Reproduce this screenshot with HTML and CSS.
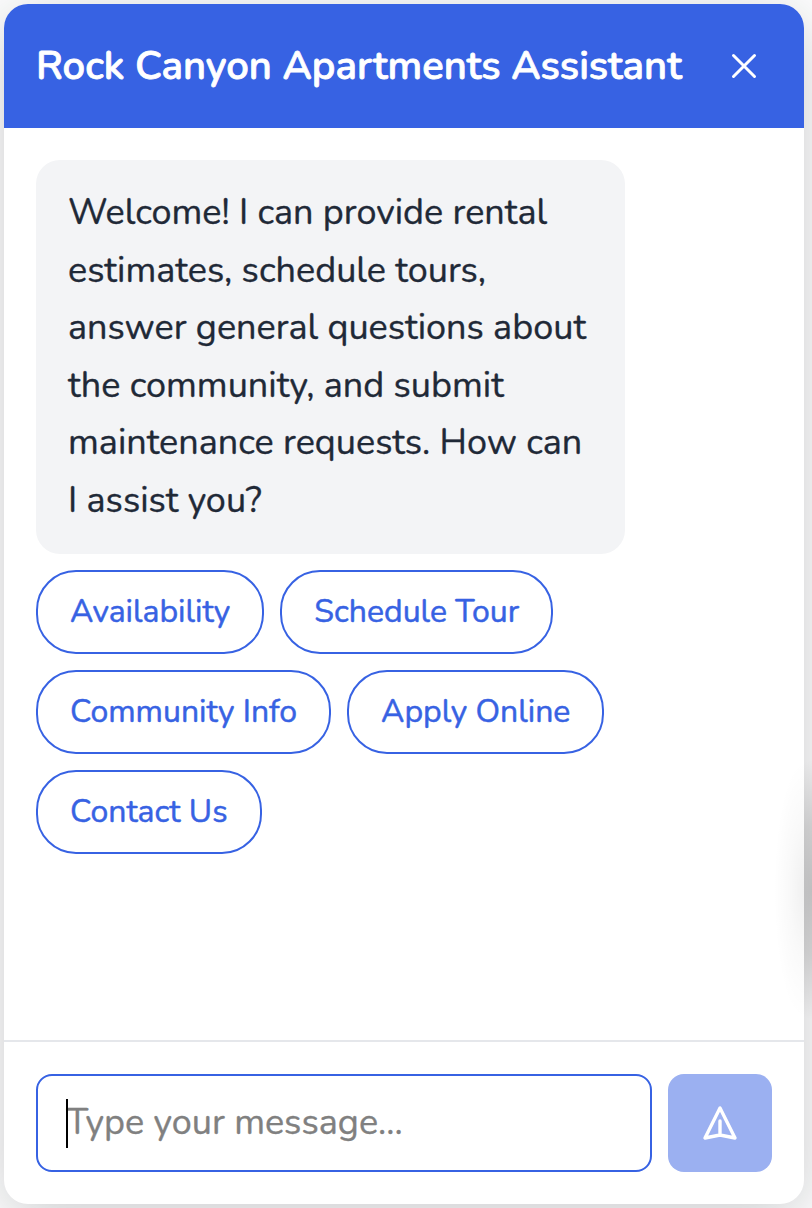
FILE: index.html
```html
<!DOCTYPE html>
<html lang="en">
<head>
<meta charset="utf-8">
<title>Rock Canyon Apartments Assistant</title>
<link rel="stylesheet" href="styles.css">
</head>
<body>
<main class="chat">
  <header class="header">
    <h1 class="title">Rock Canyon Apartments Assistant</h1>
    <button class="close" aria-label="Close"><svg width="26" height="26" viewBox="0 0 26 26"><path d="M2.5 2.5 23.5 23.5M23.5 2.5 2.5 23.5"/></svg></button>
  </header>
  <section class="messages">
    <div class="bubble">Welcome! I can provide rental estimates, schedule tours, answer general questions about the community, and submit maintenance requests. How can I&nbsp;assist you?</div>
    <div class="chips">
      <button class="chip">Availability</button>
      <button class="chip">Schedule Tour</button>
      <button class="chip">Community Info</button>
      <button class="chip">Apply Online</button>
      <button class="chip">Contact Us</button>
    </div>
  </section>
  <footer class="composer">
    <div class="field"><i class="caret"></i><span class="placeholder">Type your message...</span></div>
    <button class="send" aria-label="Send"><svg width="36" height="36" viewBox="0 0 36 36"><path d="M18 3 3 33 18 30 33 33ZM18 29V16"/></svg></button>
  </footer>
</main>
<div class="launcher-glow"></div>
<div class="launcher-edge"></div>
</body>
</html>
```
FILE: styles.css
```css
* { box-sizing: border-box; }
body {
  margin: 0;
  padding: 4px 8px 4px 4px;
  height: 1208px;
  background: #fff;
  font-family: Nunito, "Noto Sans", sans-serif;
  overflow: hidden;
  position: relative;
}
.chat {
  height: 1200px;
  display: flex;
  flex-direction: column;
  background: #fff;
  border-radius: 24px;
  overflow: hidden;
  box-shadow: 0 12px 64px rgba(20, 25, 35, .23);
}
.header {
  height: 124px;
  background: #3762e3;
  display: flex;
  align-items: center;
  justify-content: space-between;
  padding: 0 47px 0 32px;
}
.title {
  margin: 0;
  font-size: 40px;
  line-height: 60px;
  font-weight: 600;
  color: #fff;
  white-space: nowrap;
  -webkit-text-stroke: .8px;
}
button { font: inherit; border: 0; background: none; padding: 0; }
svg { display: block; }
svg path { fill: none; stroke: #fff; stroke-width: 3; stroke-linecap: round; stroke-linejoin: round; }
.messages { flex: 1; padding: 32px; }
.bubble {
  width: 589px;
  height: 394px;
  border-radius: 24px;
  background: #f3f4f6;
  color: #1f2937;
  padding: 24px 32px;
  font-size: 36px;
  line-height: 57.6px;
  -webkit-text-stroke: .35px;
}
.chips { margin-top: 16px; display: flex; flex-wrap: wrap; gap: 16px; width: 589px; }
.chip {
  height: 84px;
  border: 2px solid #3762e3;
  border-radius: 40px;
  padding: 0 32px 2px;
  color: #3762e3;
  font-size: 32px;
  white-space: nowrap;
  -webkit-text-stroke: .5px;
}
.composer { height: 164px; border-top: 2px solid #e5e7eb; padding: 32px; display: flex; gap: 16px; }
.field {
  flex: 1;
  height: 98px;
  border: 2px solid #3762e3;
  border-radius: 16px;
  display: flex;
  align-items: center;
  padding-left: 28px;
  font-size: 36px;
  color: #808080;
}
.placeholder { margin: -2px 0 0 -1.5px; -webkit-text-stroke: .35px; }
.caret { width: 2px; height: 49px; background: #000; position: relative; z-index: 1; }
.send {
  width: 104px;
  height: 98px;
  border-radius: 16px;
  background: #9bb0f1;
  display: flex;
  align-items: center;
  justify-content: center;
}
.send path { stroke-width: 3.4; }
/* Shadow cast by the launcher beyond the right edge */
.launcher-glow, .launcher-edge { position: absolute; top: 760px; height: 260px; pointer-events: none; }
.launcher-glow {
  right: 8px;
  width: 32px;
  background: radial-gradient(ellipse 30px 130px at 100% 50%, rgba(0, 0, 0, .06), rgba(0, 0, 0, .022) 50%, transparent);
}
.launcher-edge {
  right: 0;
  width: 8px;
  background: radial-gradient(ellipse 40px 130px at 100% 50%, rgba(0, 0, 0, .18), rgba(0, 0, 0, .12) 50%, transparent);
}
```
